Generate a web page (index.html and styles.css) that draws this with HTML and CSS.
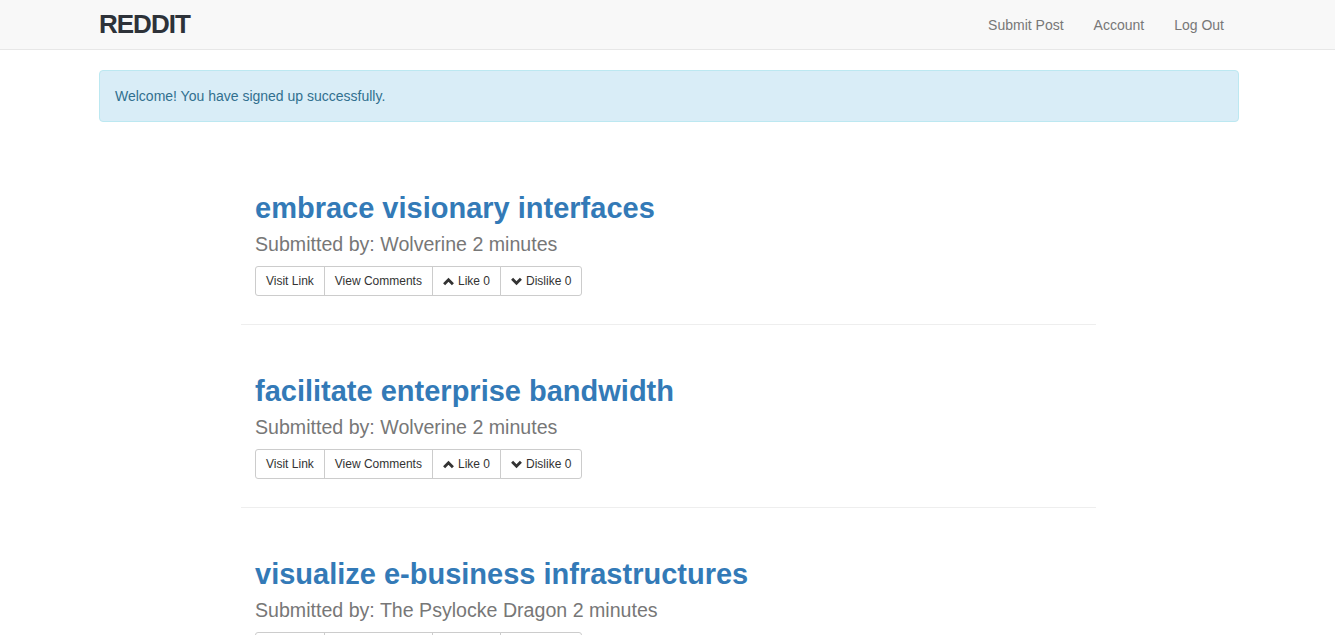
FILE: index.html
```html
<!DOCTYPE html>
<html>
<head>
<meta charset="utf-8">
<title>Reddit</title>
<link rel="stylesheet" href="styles.css">
</head>
<body>
<nav class="navbar">
  <div class="container navbar-inner">
    <a class="brand" href="#">REDDIT</a>
    <ul class="nav">
      <li><a href="#">Submit Post</a></li>
      <li><a href="#">Account</a></li>
      <li><a href="#">Log Out</a></li>
    </ul>
  </div>
</nav>
<main class="container">
  <div class="alert">Welcome! You have signed up successfully.</div>
  <div class="posts">
    <article class="post">
      <h2 class="post-title"><a href="#">embrace visionary interfaces</a></h2>
      <h4 class="post-meta">Submitted by: Wolverine 2 minutes</h4>
      <div class="btn-group">
        <a class="btn" href="#">Visit Link</a>
        <a class="btn" href="#">View Comments</a>
        <a class="btn" href="#"><svg class="chev" viewBox="0 0 10 8"><polyline points="1,6.5 5,2.5 9,6.5"/></svg>Like 0</a>
        <a class="btn" href="#"><svg class="chev" viewBox="0 0 10 8"><polyline points="1,1.5 5,5.5 9,1.5"/></svg>Dislike 0</a>
      </div>
      <hr class="divider">
    </article>
    <article class="post">
      <h2 class="post-title"><a href="#">facilitate enterprise bandwidth</a></h2>
      <h4 class="post-meta">Submitted by: Wolverine 2 minutes</h4>
      <div class="btn-group">
        <a class="btn" href="#">Visit Link</a>
        <a class="btn" href="#">View Comments</a>
        <a class="btn" href="#"><svg class="chev" viewBox="0 0 10 8"><polyline points="1,6.5 5,2.5 9,6.5"/></svg>Like 0</a>
        <a class="btn" href="#"><svg class="chev" viewBox="0 0 10 8"><polyline points="1,1.5 5,5.5 9,1.5"/></svg>Dislike 0</a>
      </div>
      <hr class="divider">
    </article>
    <article class="post">
      <h2 class="post-title"><a href="#">visualize e-business infrastructures</a></h2>
      <h4 class="post-meta">Submitted by: The Psylocke Dragon 2 minutes</h4>
      <div class="btn-group">
        <a class="btn" href="#">Visit Link</a>
        <a class="btn" href="#">View Comments</a>
        <a class="btn" href="#"><svg class="chev" viewBox="0 0 10 8"><polyline points="1,6.5 5,2.5 9,6.5"/></svg>Like 0</a>
        <a class="btn" href="#"><svg class="chev" viewBox="0 0 10 8"><polyline points="1,1.5 5,5.5 9,1.5"/></svg>Dislike 0</a>
      </div>
      <hr class="divider">
    </article>
  </div>
</main>
</body>
</html>
```
FILE: styles.css
```css
* { box-sizing: border-box; }
html, body { margin: 0; padding: 0; }
body {
  font-family: "Liberation Sans", Arial, sans-serif;
  font-size: 14px;
  line-height: 1.42857;
  color: #333;
  background: #fff;
}
a { text-decoration: none; }

.container {
  width: 1173px;
  margin: 0 auto;
  padding-left: 18px;
  padding-right: 15px;
}

.navbar {
  height: 50px;
  background: #f8f8f8;
  border-bottom: 1px solid #e7e7e7;
}
.navbar-inner {
  display: flex;
  justify-content: space-between;
  align-items: flex-start;
  height: 49px;
}
.brand {
  display: block;
  font-size: 26px;
  font-weight: bold;
  letter-spacing: -1px;
  line-height: 26px;
  padding-top: 11px;
  color: #2d3239;
}
.nav {
  display: flex;
  list-style: none;
  margin: 0;
  padding: 0;
}
.nav a {
  display: block;
  padding: 15px 15px 14px;
  line-height: 20px;
  color: #777;
}

.alert {
  margin-top: 20px;
  margin-bottom: 21px;
  padding: 15px;
  line-height: 20px;
  background: #d9edf7;
  border: 1px solid #bce8f1;
  border-radius: 4px;
  color: #31708f;
}

.posts {
  margin-left: 142px;
  width: 855px;
}
.post {
  padding: 49px 15px 0 14px;
}
.post-title {
  margin: 0 0 8px;
  font-size: 29px;
  line-height: 33px;
  font-weight: bold;
}
.post-title a { color: #337ab7; }
.post-meta {
  margin: 0 0 10px;
  font-size: 19.6px;
  line-height: 23px;
  font-weight: normal;
  color: #777;
}
.btn-group {
  display: flex;
}
.btn {
  display: flex;
  align-items: center;
  height: 30px;
  padding: 0 10px;
  font-size: 12px;
  line-height: 18px;
  color: #333;
  background: #fff;
  border: 1px solid #ccc;
  margin-left: -1px;
}
.btn:first-child { margin-left: 0; border-radius: 3px 0 0 3px; }
.btn:last-child { border-radius: 0 3px 3px 0; }
.chev {
  width: 11px;
  height: 9px;
  margin-right: 4px;
  fill: none;
  stroke: #333;
  stroke-width: 2.6;
  stroke-linecap: butt;
  stroke-linejoin: miter;
}
.divider {
  margin: 28px -15px 1px -14px;
  border: 0;
  border-top: 1px solid #eee;
  height: 0;
}
```
